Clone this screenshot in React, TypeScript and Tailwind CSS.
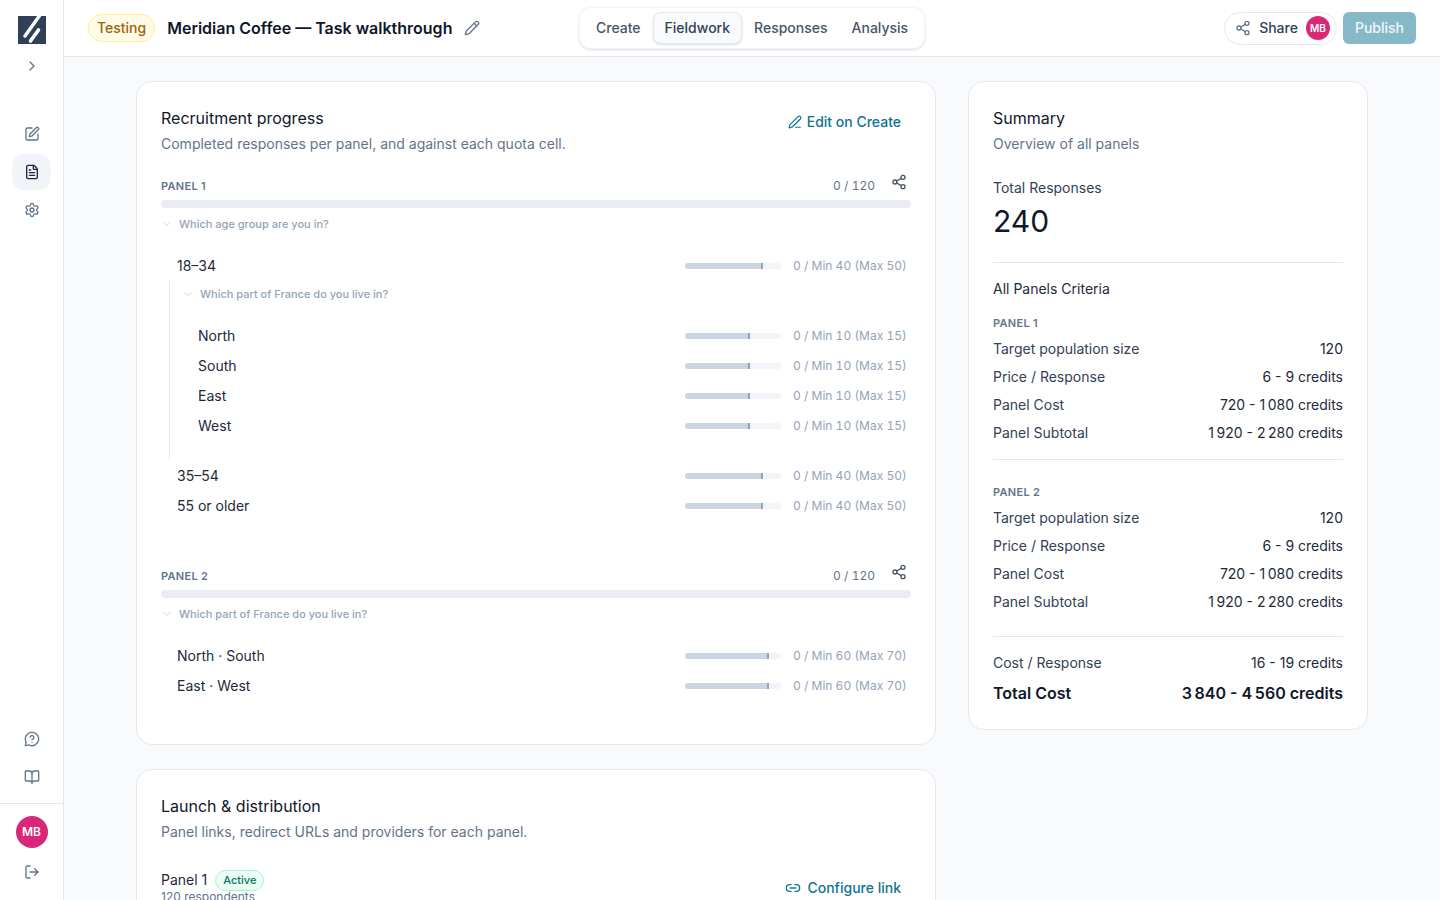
import {
  BookOpen,
  ChevronDown,
  ChevronRight,
  FileText,
  Link2,
  LogOut,
  MessageCircleQuestion,
  Pencil,
  PenLine,
  Settings,
  Share2,
  SquarePen,
} from "lucide-react";

const Logo = () => (
  <svg width="28" height="28" viewBox="0 0 28 28">
    <defs>
      <clipPath id="logo-clip">
        <rect width="28" height="28" />
      </clipPath>
    </defs>
    <rect width="28" height="28" fill="#2f4058" />
    <g clipPath="url(#logo-clip)" stroke="#fff" strokeLinecap="round" fill="none">
      <path d="M22 -1 L7 20" strokeWidth="3.4" />
      <path d="M20.5 14 L12.5 25" strokeWidth="3.6" />
    </g>
  </svg>
);

const QuotaRow = ({
  label,
  text,
  fill,
  indent,
}: {
  label: string;
  text: string;
  fill: number;
  indent?: boolean;
}) => (
  <div className={`flex h-[30px] items-center justify-between pr-[5px] ${indent ? "pl-7" : "pl-4"}`}>
    <span className="text-sm text-[#1e293b]">{label}</span>
    <div className="flex items-center gap-3">
      <div className="relative h-1.5 w-24 rounded-full bg-[#f1f5f9]">
        <div className="h-1.5 rounded-l-full bg-[#cbd5e1]" style={{ width: `${fill}%` }} />
        <div className="absolute top-0 -ml-px h-1.5 w-0.5 bg-[#94a3b8]" style={{ left: `${fill}%` }} />
      </div>
      <span className="w-[113px] text-right text-xs whitespace-nowrap text-[#94a3b8] tabular-nums">{text}</span>
    </div>
  </div>
);

const Question = ({ text, nested }: { text: string; nested?: boolean }) => (
  <div className={`flex h-4 items-center gap-[6px] ${nested ? "pl-3" : ""}`}>
    <ChevronDown className="h-3 w-3 text-[#cbd5e1]" />
    <span className="text-[11px] font-medium text-[#94a3b8]">{text}</span>
  </div>
);

const PanelHeader = ({ name }: { name: string }) => (
  <>
    <div className="flex h-5 items-center justify-between">
      <span className="text-[11px] font-semibold tracking-[0.3px] text-[#64748b]">{name}</span>
      <div className="flex items-center gap-4 pr-[4px]">
        <span className="text-xs text-[#64748b] tabular-nums">0 / 120</span>
        <Share2 className="mb-[9px] h-4 w-4 text-[#475569]" />
      </div>
    </div>
    <div className="mt-1 h-2 rounded-full bg-[#e9edf2]" />
  </>
);

const SummaryRow = ({ label, value }: { label: string; value: string }) => (
  <div className="flex h-7 items-center justify-between text-sm text-[#334155]">
    <span>{label}</span>
    <span className="text-[#1e293b]">{value}</span>
  </div>
);

const PanelSummary = ({ name }: { name: string }) => (
  <div>
    <div className="flex h-4 items-center text-[11px] font-semibold tracking-[0.3px] text-[#64748b]">{name}</div>
    <div className="mt-[4px]">
      <SummaryRow label="Target population size" value="120" />
      <SummaryRow label="Price / Response" value="6 - 9 credits" />
      <SummaryRow label="Panel Cost" value={"720 - 1\u2009080 credits"} />
      <SummaryRow label="Panel Subtotal" value={"1\u2009920 - 2\u2009280 credits"} />
    </div>
  </div>
);

const RailButton = ({ children, active }: { children: React.ReactNode; active?: boolean }) => (
  <div className={`flex h-9 w-[39px] items-center justify-center rounded-xl ${active ? "bg-[#f1f5f9] text-[#1e293b]" : "text-[#64748b]"}`}>
    {children}
  </div>
);

export default function App() {
  return (
    <div className="flex h-screen overflow-hidden bg-[#f8fafc] font-['Inter',sans-serif]">
      <aside className="flex w-16 shrink-0 flex-col items-center border-r border-[#e2e8f0] bg-white">
        <div className="mt-4">
          <Logo />
        </div>
        <ChevronRight className="mt-[14px] h-4 w-4 text-[#64748b]" />
        <div className="mt-[42px] flex flex-col gap-[2px]">
          <RailButton>
            <SquarePen className="h-4 w-4" />
          </RailButton>
          <RailButton active>
            <FileText className="h-4 w-4" />
          </RailButton>
          <RailButton>
            <Settings className="h-4 w-4" />
          </RailButton>
        </div>
        <div className="mt-auto flex flex-col gap-[2px]">
          <RailButton>
            <MessageCircleQuestion className="h-4 w-4" />
          </RailButton>
          <RailButton>
            <BookOpen className="h-4 w-4" />
          </RailButton>
        </div>
        <div className="mt-[8px] flex h-[97px] w-full flex-col items-center border-t border-[#e2e8f0] pt-3">
          <div className="flex h-8 w-8 items-center justify-center rounded-full bg-[#db2777] text-xs font-semibold text-white">
            MB
          </div>
          <LogOut className="mt-4 h-4 w-4 text-[#64748b]" />
        </div>
      </aside>

      <div className="flex min-w-0 flex-1 flex-col">
        <header className="relative flex h-[57px] shrink-0 items-center border-b border-[#e2e8f0] bg-white pr-6 pl-6">
          <span className="rounded-full border border-[#fef08a] bg-[#fefce8] px-2 py-[3px] text-sm font-medium text-[#a16207]">
            Testing
          </span>
          <span className="ml-3 text-base font-semibold text-[#0f172a]">Meridian Coffee — Task walkthrough</span>
          <Pencil className="ml-3 h-4 w-4 text-[#64748b]" />
          <nav className="absolute top-[7px] left-[515px] flex h-[42px] items-center gap-[1px] rounded-xl border border-[#f1f5f9] bg-white pr-[4px] pl-[5px] text-sm font-medium text-[#475569] shadow-sm">
            <span className="px-[11px] py-[6px]">Create</span>
            <span className="rounded-lg border border-[#e2e8f0] bg-[#f8fafc] px-[11px] py-[5px] text-[#334155] shadow-sm">
              Fieldwork
            </span>
            <span className="px-[11px] py-[6px]">Responses</span>
            <span className="px-3 py-[6px]">Analysis</span>
          </nav>
          <div className="ml-auto flex items-center gap-[6px]">
            <div className="flex h-[33px] items-center gap-2 rounded-full border border-[#e2e8f0] bg-white pr-[6px] pl-[10px] text-sm font-medium text-[#334155]">
              <Share2 className="h-4 w-4 text-[#64748b]" />
              <span>Share</span>
              <div className="flex h-6 w-6 items-center justify-center rounded-full bg-[#db2777] text-[10px] font-semibold text-white">
                MB
              </div>
            </div>
            <button className="h-8 rounded-md bg-[#86b9c8] px-3 text-sm font-medium text-[#f1f7f9]">Publish</button>
          </div>
        </header>

        <main className="flex flex-1 items-start justify-center gap-8 overflow-hidden pt-6">
          <div className="flex w-[800px] shrink-0 flex-col gap-6">
            <section className="h-[664px] rounded-2xl border border-[#e2e8f0] bg-white px-6 pt-[24px]">
              <div className="flex items-start justify-between">
                <div>
                  <h2 className="text-base leading-6 text-[#0f172a]">Recruitment progress</h2>
                  <p className="mt-[2px] text-sm leading-6 text-[#64748b]">
                    Completed responses per panel, and against each quota cell.
                  </p>
                </div>
                <div className="mt-[6px] flex items-center gap-[5px] pr-[10px] text-sm font-medium text-[#0e7490]">
                  <PenLine className="h-[14px] w-[14px]" />
                  Edit on Create
                </div>
              </div>

              <div className="mt-5">
                <PanelHeader name="PANEL 1" />
                <div className="mt-2">
                  <Question text="Which age group are you in?" />
                </div>
                <div className="mt-[19px]">
                  <QuotaRow label="18–34" text="0 / Min 40 (Max 50)" fill={80} />
                </div>
                <div className="ml-2 flex h-[178px] flex-col border-l border-[#e2e8f0]">
                  <div className="mt-[5px]">
                    <Question text="Which part of France do you live in?" nested />
                  </div>
                  <div className="mt-[19px]">
                    <QuotaRow label="North" text="0 / Min 10 (Max 15)" fill={67} indent />
                    <QuotaRow label="South" text="0 / Min 10 (Max 15)" fill={67} indent />
                    <QuotaRow label="East" text="0 / Min 10 (Max 15)" fill={67} indent />
                    <QuotaRow label="West" text="0 / Min 10 (Max 15)" fill={67} indent />
                  </div>
                </div>
                <div className="mt-[2px]">
                  <QuotaRow label="35–54" text="0 / Min 40 (Max 50)" fill={80} />
                  <QuotaRow label="55 or older" text="0 / Min 40 (Max 50)" fill={80} />
                </div>
              </div>

              <div className="mt-[45px]">
                <PanelHeader name="PANEL 2" />
                <div className="mt-2">
                  <Question text="Which part of France do you live in?" />
                </div>
                <div className="mt-[19px]">
                  <QuotaRow label="North · South" text="0 / Min 60 (Max 70)" fill={86} />
                  <QuotaRow label="East · West" text="0 / Min 60 (Max 70)" fill={86} />
                </div>
              </div>
            </section>

            <section className="rounded-2xl border border-[#e2e8f0] bg-white px-6 pt-[24px] pb-6">
              <h2 className="text-base leading-6 text-[#0f172a]">Launch &amp; distribution</h2>
              <p className="mt-[2px] text-sm leading-6 text-[#64748b]">
                Panel links, redirect URLs and providers for each panel.
              </p>
              <div className="mt-[26px] flex items-start justify-between">
                <div>
                  <div className="flex items-center gap-2">
                    <span className="text-sm text-[#1e293b]">Panel 1</span>
                    <span className="rounded-full border border-[#a7f3d0] bg-[#ecfdf5] px-[7px] py-px text-[11px] font-medium text-[#047857]">
                      Active
                    </span>
                  </div>
                  <div className="-mt-[2px] text-xs text-[#64748b]">120 respondents</div>
                </div>
                <div className="mt-2 flex items-center gap-[6px] pr-[10px] text-sm font-medium text-[#0e7490]">
                  <Link2 className="h-4 w-4" />
                  Configure link
                </div>
              </div>
            </section>
          </div>

          <section className="h-[649px] w-[400px] shrink-0 rounded-2xl border border-[#e2e8f0] bg-white px-6 pt-[24px]">
            <h2 className="text-base leading-6 text-[#0f172a]">Summary</h2>
            <p className="mt-[2px] text-sm leading-6 text-[#64748b]">Overview of all panels</p>
            <div className="mt-[22px] text-sm leading-5 text-[#334155]">Total Responses</div>
            <div className="mt-[3px] text-[30px] leading-10 text-[#0f172a]">240</div>
            <div className="mt-[21px] border-t border-[#e2e8f0] pt-4">
              <div className="text-sm leading-5 text-[#1e293b]">All Panels Criteria</div>
              <div className="mt-[16px]">
                <PanelSummary name="PANEL 1" />
              </div>
            </div>
            <div className="mt-3 border-t border-[#e2e8f0] pt-6">
              <PanelSummary name="PANEL 2" />
            </div>
            <div className="mt-5 border-t border-[#e2e8f0] pt-3">
              <SummaryRow label="Cost / Response" value="16 - 19 credits" />
              <div className="flex h-8 items-center justify-between text-base font-semibold text-[#0f172a]">
                <span>Total Cost</span>
                <span>{"3\u2009840 - 4\u2009560 credits"}</span>
              </div>
            </div>
          </section>
        </main>
      </div>
    </div>
  );
}
